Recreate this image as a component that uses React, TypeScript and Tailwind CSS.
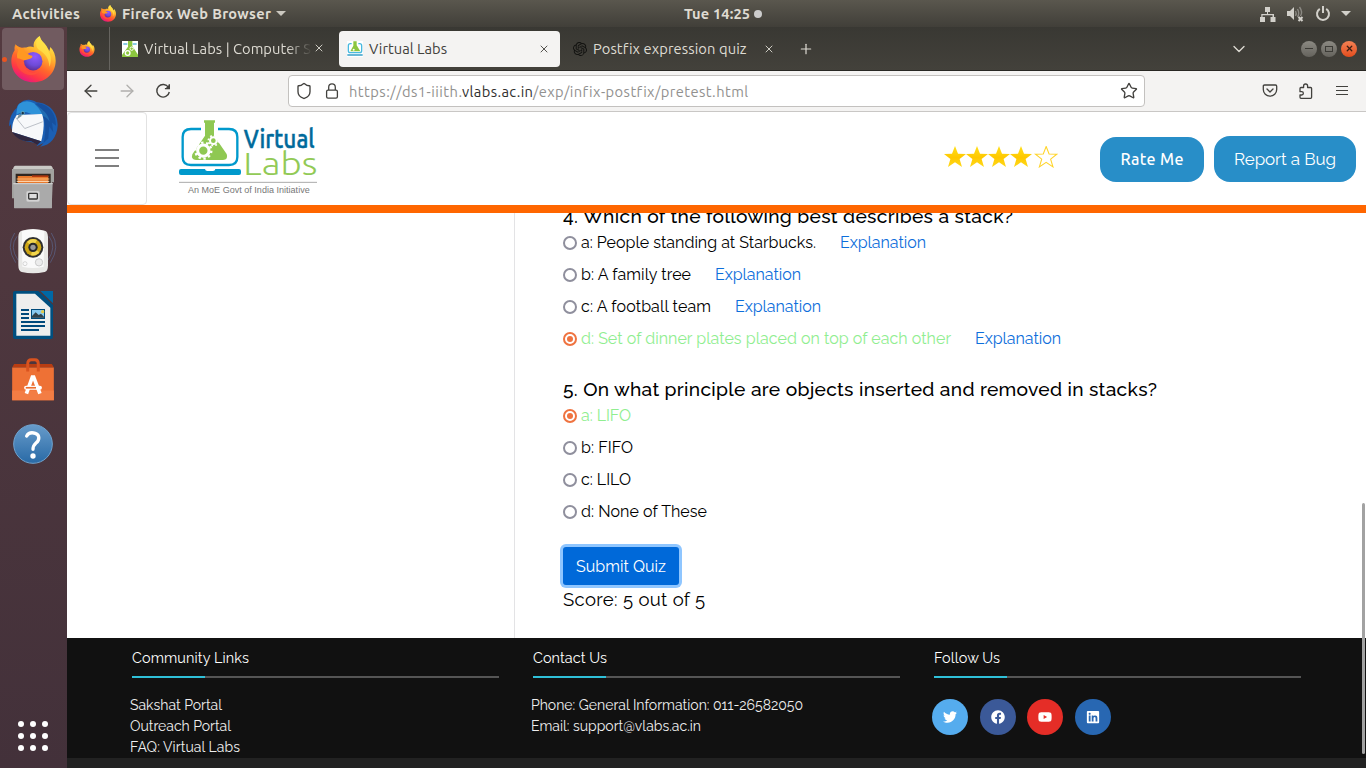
import { useLayoutEffect, useRef, useState } from 'react';
import type { ReactNode } from 'react';
import { FaTwitter, FaFacebook, FaYoutube, FaLinkedin } from 'react-icons/fa';
import { SiOpenai } from 'react-icons/si';
import { ArrowLeft, ArrowRight, ChevronDown, Plus, Shield, Star, X } from 'lucide-react';

const ubuntu = "font-['Ubuntu','Noto_Sans','Open_Sans',sans-serif]";
const raleway = "font-['Raleway','Lato',sans-serif]";

/** One line of text whose tracking is adjusted to fill a given width. */
function Fit({ w, className = '', children }: { w: number; className?: string; children: string }) {
  const ref = useRef<HTMLSpanElement>(null);
  const [spacing, setSpacing] = useState(0);
  useLayoutEffect(() => {
    if (!ref.current) return;
    const natural = ref.current.getBoundingClientRect().width - spacing * children.length;
    setSpacing((w - natural) / (children.length - 1));
  }, [w, children]);
  return (
    <span className={`block shrink-0 whitespace-pre ${className}`} style={{ width: w }}>
      <span ref={ref} className="inline-block" style={{ letterSpacing: spacing }}>
        {children}
      </span>
    </span>
  );
}

function Firefox({ className, id }: { className: string; id: string }) {
  return (
    <svg viewBox="0 0 134 142" className={className}>
      <defs>
        <linearGradient id={`${id}a`} x1="0.8" y1="0" x2="0.3" y2="1">
          <stop offset="0.05" stopColor="#fff44f" />
          <stop offset="0.35" stopColor="#ffb62e" />
          <stop offset="0.6" stopColor="#ff6a2a" />
          <stop offset="0.82" stopColor="#ff3647" />
          <stop offset="1" stopColor="#e31587" />
        </linearGradient>
        <radialGradient id={`${id}b`} cx="0.6" cy="0.25" r="0.8">
          <stop offset="0" stopColor="#9059ff" />
          <stop offset="0.6" stopColor="#6e4bd8" />
          <stop offset="1" stopColor="#5b2b92" />
        </radialGradient>
      </defs>
      <path
        fill={`url(#${id}a)`}
        d="M12 26C13 33 17 38 21 42C28 36 37 33 45 35C53 31 60 31 68 34C65 20 73 8 86 0C89 16 104 22 110 37L115 45L118 33C128 43 134 58 134 75C134 112 105 140 67 140C29 140 0 112 0 75C0 63 4 51 10 43C9 37 10 31 12 26Z"
      />
      <path fill="#ff5a36" opacity=".55" d="M13 27C18 31 28 36 38 35L39 90C43 106 62 116 82 109C70 124 40 120 25 102C12 85 10 60 21 43C15 38 12 32 13 27Z" />
      <circle cx="66" cy="76" r="28" fill={`url(#${id}b)`} />
      <path fill="#ff9822" d="M12 25C19 32 30 37 39 36C36 44 45 54 63 60C67 66 56 70 46 72C37 76 34 69 18 67C16 58 17 50 21 43C15 38 12 32 12 25Z" />
      <path fill="#ffe14a" opacity="0.75" d="M86 2C89 18 107 24 112 46C121 58 122 78 115 93C114 67 101 51 84 42C71 31 73 14 86 2Z" />
    </svg>
  );
}

function Thunderbird() {
  return (
    <svg viewBox="0 0 146 146" className="h-[49px] w-[49px]">
      <path fill="#1b5fb4" d="M34 12C48 -2 70 1 82 10C122 12 146 43 145 80C143 113 124 139 93 142L103 131L82 141L86 133L65 128C34 127 6 105 5 75L0 82C1 57 9 39 23 27C24 20 28 14 34 12Z" />
      <path fill="#2e92d9" d="M33 13C52 0 75 8 91 25C108 37 119 51 121 68C109 49 89 45 66 45C47 34 32 39 22 48C23 30 25 19 33 13Z" />
      <path fill="#123f85" d="M87 12C124 19 140 48 140 80L128 70L132 99L120 82L117 118L103 131C115 88 107 40 77 16Z" opacity=".45" />
      <path fill="#f7f8fa" d="M23 48L98 45C106 64 105 91 96 126L9 98C9 78 12 63 23 48Z" />
      <path fill="none" stroke="#9da3ae" strokeWidth="2" d="M19 54L47 88L100 68" />
      <path fill="#30273f" d="M9 98L96 126L85 136L66 126C40 127 20 116 9 98Z" />
      <circle cx="41" cy="42" r="5" fill="#183049" stroke="#77bfc7" strokeWidth="2" />
      <path fill="#78929d" d="M30 44L23 61L39 50Z" />
    </svg>
  );
}

function Files() {
  return (
    <svg viewBox="0 0 126 132" className="h-[44px] w-[42px]">
      <path fill="#c9c9c5" d="M10 2H116Q121 2 123 13H3Q5 2 10 2Z" />
      <path fill="#a2a29f" d="M0 12H126V52H120V129H6V100H0Z" />
      <path fill="#302620" d="M11 26H116V56H11Z" />
      <path fill="#e87a2e" d="M17 33H109V54H17Z" />
      <path fill="#b23a10" d="M60 31H109V36H60Z" />
      <path stroke="#ffba73" strokeWidth="3" d="M14 42H112" />
      <path stroke="#ffe5c5" strokeWidth="3" d="M14 49H112" />
      <path fill="#aaa" d="M4 54H122L119 130H7Z" />
      <path fill="#ccc" d="M4 54H122V58H4Z" />
      <rect x="43" y="78" width="40" height="32" rx="5" fill="#d4d4d4" stroke="#bababa" />
      <rect x="50" y="85" width="26" height="17" rx="2" fill="#dedede" stroke="#373737" strokeWidth="4" />
    </svg>
  );
}

function Speaker() {
  return (
    <svg viewBox="0 0 144 138" className="h-[46px] w-[48px]">
      <g fill="none" stroke="#5f76a8" strokeWidth="3" opacity=".5">
        <path d="M17 15Q-11 56 20 104M24 25Q0 57 27 96M127 15Q155 56 124 104M120 25Q144 57 117 96" />
      </g>
      <path fill="#e8e8e6" d="M38 8Q72 -2 107 8Q116 9 117 27V112Q117 130 107 132Q72 140 38 132Q28 129 28 112V27Q28 11 38 8Z" />
      <path fill="#fafafa" d="M39 9Q72 0 106 9L104 116Q72 124 40 116Z" />
      <circle cx="72" cy="58" r="31" fill="#303030" />
      <circle cx="72" cy="58" r="25" fill="#cda514" />
      <path fill="#f1d54c" d="M54 42A25 25 0 0 1 84 36L72 58ZM91 73A25 25 0 0 1 66 82L72 58Z" />
      <circle cx="72" cy="58" r="14" fill="#292929" />
      <circle cx="72" cy="58" r="8" fill="#999" />
      <circle cx="90" cy="103" r="11" fill="#ececec" stroke="#b6b6b6" strokeWidth="2" />
      <circle cx="48" cy="107" r="6" fill="none" stroke="#c6c6c6" strokeWidth="2" />
    </svg>
  );
}

function Writer() {
  return (
    <svg viewBox="0 0 120 144" className="h-[48px] w-[40px]">
      <path fill="#004f7f" d="M6 0H76L120 42V138Q120 144 114 144H6Q0 144 0 138V6Q0 0 6 0Z" />
      <path fill="#eeeeed" d="M10 8H66L112 50V134H10Z" />
      <path fill="#0068a5" d="M82 0H120V37Z" />
      <path stroke="#00497b" strokeWidth="6" d="M24 57H48M24 69H48M24 81H48M24 93H96M24 105H96M24 117H78" />
      <rect x="54" y="54" width="42" height="30" fill="#004a7a" />
      <rect x="57" y="57" width="36" height="23" fill="#89c9ef" />
      <circle cx="89" cy="62" r="5" fill="#e6cb47" />
      <path fill="#344249" d="M57 80V75L68 64L77 72L84 68L93 77V80Z" />
    </svg>
  );
}

function Software() {
  return (
    <svg viewBox="0 0 126 130" className="h-[43px] w-[42px]">
      <path fill="#b83d12" d="M6 18H120L126 29H0Z" />
      <path fill="#ee7135" d="M0 29H126V128H0Z" />
      <path fill="#f37d44" d="M0 98H126V128H0Z" />
      <path fill="none" stroke="#d9531f" strokeWidth="9" d="M47 41V18Q47 5 58 5H69Q79 5 79 18V41" />
      <path fill="none" stroke="#fff" strokeWidth="11" d="M43 108L61 58H65L84 108" />
      <rect x="36" y="84" width="54" height="12" rx="6" fill="#fff" />
      <path stroke="#ec6c2d" strokeWidth="5" d="M41 90H72" />
    </svg>
  );
}

function Help() {
  return (
    <svg viewBox="0 0 120 120" className="mt-[2px] h-10 w-10">
      <defs>
        <linearGradient id="helpFill" x1="0" y1="0" x2="0" y2="1">
          <stop stopColor="#679bca" />
          <stop offset="1" stopColor="#296aa6" />
        </linearGradient>
      </defs>
      <circle cx="60" cy="60" r="58" fill="url(#helpFill)" stroke="#70a3ce" strokeWidth="3" />
      <path fill="none" stroke="#fff" strokeWidth="10" strokeLinecap="round" strokeLinejoin="round" d="M41 36C46 27 57 25 67 28C81 33 80 48 69 57C62 63 60 67 60 76" />
      <circle cx="60" cy="96" r="8" fill="#fff" />
    </svg>
  );
}

function DockItem({ active, children }: { active?: boolean; children: ReactNode }) {
  return (
    <div className="flex h-16 w-full items-center pl-[2px]">
      <div className={`relative flex h-[62px] w-[62px] items-center justify-center rounded-[4px] ${active ? 'bg-[#715b60]' : ''}`}>
        {active && <i className="absolute left-0 h-[5px] w-[5px] rounded-full bg-[#e95420]" />}
        {children}
      </div>
    </div>
  );
}

function Flask() {
  return (
    <svg viewBox="0 0 48 48" className="mt-px h-4 w-4">
      <path fill="#fff" d="M0 0H48V48H0Z" />
      <path stroke="#159aca" strokeWidth="3" d="M4 9H16M32 9H44" />
      <path fill="#8cc63f" d="M18 0H31V15L48 41V48H0V42L18 17Z" />
      <circle cx="17" cy="36" r="7" fill="none" stroke="#fff" strokeWidth="4" />
      <circle cx="29" cy="23" r="5" fill="none" stroke="#fff" strokeWidth="3" />
    </svg>
  );
}

function LaptopIcon() {
  return (
    <svg viewBox="0 0 48 48" className="h-4 w-4">
      <path fill="#fff" d="M0 0H48V48H0Z" />
      <path fill="none" stroke="#49b9df" strokeWidth="4" d="M14 8H10Q4 8 4 14V29Q4 35 10 35H38Q44 35 44 29V14Q44 8 38 8H34" />
      <path stroke="#49a9ce" strokeWidth="5" d="M1 42H47" />
      <path fill="#8cc63f" d="M19 1H29V13L40 31H10L19 14Z" />
      <circle cx="20" cy="26" r="3" fill="#fff" />
    </svg>
  );
}

function Logo() {
  return (
    <svg viewBox="336 45 414 225" className="h-[75px] w-[138px]">
      <g fill="none" stroke="#0099cc" strokeWidth="7">
        <path d="M402 72H372Q347 72 347 96V156Q347 180 372 180H486Q511 180 511 156V96Q511 72 486 72H453" />
      </g>
      <path fill="#0099cc" d="M342 192H414Q415 198 421 198H438Q444 198 445 192H516Q522 192 522 198V204Q522 210 516 210H342Q336 210 336 204V198Q336 192 342 192Z" />
      <path fill="#8fc852" d="M411 46H444V53H441V92L479 147Q485 164 468 165H387Q371 164 376 148L414 92V53H411Z" />
      <g fill="none" stroke="#fff">
        <circle cx="409" cy="137" r="17" strokeWidth="9" />
        <circle cx="409" cy="137" r="24" strokeWidth="7" strokeDasharray="7.2 7.88" />
        <circle cx="439" cy="107" r="10" strokeWidth="6" />
        <circle cx="439" cy="107" r="15" strokeWidth="5" strokeDasharray="5.4 6.38" />
      </g>
      <text x="530" y="129" textLength="213" lengthAdjust="spacingAndGlyphs" fontFamily="Ubuntu, Roboto, sans-serif" fontWeight="500" fontSize="80" fill="#006a9b" stroke="#006a9b" strokeWidth="1.500">Virtual</text>
      <text x="529" y="210" textLength="222" lengthAdjust="spacingAndGlyphs" fontFamily="Ubuntu, Roboto, sans-serif" fontWeight="300" fontSize="98" fill="#92ca56">Labs</text>
      <path stroke="#aaa" strokeWidth="3" d="M336 232H750" />
      <text x="363" y="264" textLength="365" fontFamily="Liberation Sans, sans-serif" fontSize="27" fill="#777">An MoE Govt of India Initiative</text>
    </svg>
  );
}

function Stars() {
  const d = 'M11 0L14 7.8L22 8L15.6 13L18 21L11 16.3L4 21L6.4 13L0 8L8 7.8Z';
  return (
    <svg viewBox="0 0 114 22" className="h-[22px] w-[114px]">
      <defs>
        <linearGradient id="gold" x1="0" y1="0" x2="0" y2="1">
          <stop stopColor="#ffe01b" />
          <stop offset=".55" stopColor="#ffc800" />
          <stop offset="1" stopColor="#ffd91a" />
        </linearGradient>
      </defs>
      {[0, 22, 44, 66].map((x) => (
        <path key={x} d={d} transform={`translate(${x} 0)`} fill="url(#gold)" />
      ))}
      <path d={d} transform="translate(91.5 .5) scale(.97)" fill="#fff" stroke="#ffd42a" strokeWidth="1.1" />
    </svg>
  );
}

function Option({ w, text, checked, explain }: { w: number; text: string; checked?: boolean; explain?: boolean }) {
  return (
    <label className="flex h-8 items-center pt-[2px] text-[16px] leading-8">
      <span className={`mr-1 flex h-[14px] w-[14px] shrink-0 items-center justify-center rounded-full border-2 bg-white ${checked ? 'border-[#ef7340]' : 'border-[#8f8f9d]'}`}>
        {checked && <i className="h-[6px] w-[6px] rounded-full bg-[#ef7340]" />}
      </span>
      <Fit w={w} className={checked ? 'text-[#90ee90]' : 'text-black'}>{text}</Fit>
      {explain && <Fit w={86} className="ml-6 text-[#0d6edb]">Explanation</Fit>}
    </label>
  );
}

function FooterColumn({ title, w, children }: { title: string; w: number; children: ReactNode }) {
  return (
    <section className="w-[401px] shrink-0">
      <Fit w={w} className="ml-[2px] h-[38px] text-[14.4px] leading-[39px] text-white">{title}</Fit>
      <div className="ml-[2px] h-[2px] w-[367px] bg-[#555]">
        <div className="h-full w-[73px] bg-[#2fc0d8]" />
      </div>
      {children}
    </section>
  );
}

const social = [
  { Icon: FaTwitter, tone: 'bg-[#55acee]', gap: 'mr-3' },
  { Icon: FaFacebook, tone: 'bg-[#3b5998]', gap: 'mr-[11px]' },
  { Icon: FaYoutube, tone: 'bg-[#e52d27]', gap: 'mr-3' },
  { Icon: FaLinkedin, tone: 'bg-[#2867b2]', gap: '' },
];

export default function App() {
  return (
    <div className={`flex h-[768px] w-[1366px] flex-col overflow-hidden bg-white ${ubuntu}`}>
      <header className="flex h-[27px] shrink-0 items-center bg-linear-to-b from-[#5a574e] to-[#413f39] text-[14.6px] font-bold leading-[27px] text-[#dfdbd2]">
        <Fit w={68} className="ml-3">Activities</Fit>
        <Firefox id="top" className="ml-5 h-[17px] w-4" />
        <Fit w={149} className="ml-[6px]">Firefox Web Browser</Fit>
        <i className="ml-[5px] border-x-[5px] border-t-[5px] border-x-transparent border-t-[#cbc8c0]" />
        <Fit w={66} className="ml-[398px]">Tue 14:25</Fit>
        <i className="ml-1 h-2 w-2 rounded-full bg-[#ccc]" />
        <div className="ml-auto flex items-center pr-[15px]">
          <svg viewBox="0 0 16 16" className="mr-[-1px] h-4 w-4" fill="#d2d0ca">
            <path d="M5 1H10V6H8V8H14V11H15.5V16H10.500V11H12.500V9.200H2.500V11H5V16H0V11H1.300V8H7V6H5Z" />
          </svg>
          <svg viewBox="0 0 18 16" className="ml-3 h-4 w-[18px]">
            <path fill="#d2d0ca" d="M0 5H3L7 1V14L3 10H0Z" />
            <path fill="none" stroke="#8b8983" strokeWidth="1.400" d="M8.500 5Q10 7.500 8.500 10M10.500 3Q13 7.500 10.500 11M12.500 1Q16 6 13.500 10" />
            <path stroke="#d2d0ca" strokeWidth="2" d="M11.500 11L15.500 15M15.500 11L11.500 15" />
          </svg>
          <svg viewBox="0 0 16 16" className="ml-[10px] h-4 w-4" fill="none" stroke="#d2d0ca" strokeWidth="2">
            <path d="M4.800 2.800A6 6 0 1 0 11.200 2.800M8 0V7" />
          </svg>
          <i className="ml-[10px] border-x-[5px] border-t-[5px] border-x-transparent border-t-[#d2d0ca]" />
        </div>
      </header>

      <div className="flex min-h-0 flex-1">
        <nav className="flex w-[67px] shrink-0 flex-col bg-linear-to-b from-[#543a40] to-[#43313a]">
          <DockItem active><Firefox id="dock" className="h-[47px] w-[45px]" /></DockItem>
          <DockItem><Thunderbird /></DockItem>
          <DockItem><Files /></DockItem>
          <DockItem><Speaker /></DockItem>
          <DockItem><Writer /></DockItem>
          <DockItem><Software /></DockItem>
          <DockItem><Help /></DockItem>
          <div className="mt-auto grid h-16 grid-cols-[repeat(3,6px)] content-center justify-center gap-[6px] pr-[1px]">
            {Array.from({ length: 9 }, (_, i) => (
              <i key={i} className="h-[6px] w-[6px] rounded-full bg-white" />
            ))}
          </div>
        </nav>

        <div className="flex min-w-0 flex-1 flex-col">
          <div className="flex h-11 shrink-0 items-center border-b border-[#282723] bg-linear-to-b from-[#393833] to-[#43413b] text-[14.7px] text-[#dedbd3]">
            <div className="flex h-full w-[43px] shrink-0 items-center border-r border-[#66645f] pl-[12px]">
              <Firefox id="pin" className="h-4 w-4" />
            </div>
            <div className="flex w-[229px] shrink-0 items-center pl-3">
              <Flask />
              <div className="ml-[6px] w-[168px] overflow-hidden pt-[2px] mask-r-from-85% mask-r-to-100%">
                <Fit w={167}>Virtual Labs | Computer S</Fit>
              </div>
              <X className="ml-px h-3 w-3" strokeWidth={1.8} />
            </div>
            <div className="flex h-9 w-[221px] shrink-0 items-center rounded-[4px] bg-[#f4f3f2] pl-2 text-[#42413c]">
              <LaptopIcon />
              <Fit w={78} className="ml-[6px] pt-[2px]">Virtual Labs</Fit>
              <X className="ml-auto mr-[10px] h-3 w-3" strokeWidth={1.8} />
            </div>
            <SiOpenai className="ml-[13px] h-[14px] w-[14px] text-[#11110f]" />
            <Fit w={153} className="ml-[6px] pt-[2px]">Postfix expression quiz</Fit>
            <X className="ml-[17px] h-3 w-3" strokeWidth={1.8} />
            <Plus className="ml-[23px] h-4 w-4" strokeWidth={1.8} />
            <div className="ml-auto flex items-center pr-[9px]">
              <ChevronDown className="mr-[52px] h-5 w-5" strokeWidth={1.6} />
              <span className="mr-1 flex h-4 w-4 items-center justify-center rounded-full bg-linear-to-b from-[#8c8a83] to-[#65635d]">
                <i className="h-px w-2 bg-[#3c3b36]" />
              </span>
              <span className="mr-1 flex h-4 w-4 items-center justify-center rounded-full bg-linear-to-b from-[#8c8a83] to-[#65635d]">
                <i className="h-[6px] w-2 border border-[#3c3b36]" />
              </span>
              <span className="flex h-4 w-4 items-center justify-center rounded-full bg-linear-to-b from-[#f48153] to-[#e34c1b] text-[#3c1f15]">
                <X className="h-[9px] w-[9px]" strokeWidth={3.500} />
              </span>
            </div>
          </div>

          <div className="flex h-[41px] shrink-0 items-center border-b border-[#c9c7c5] bg-[#f4f3f2] text-[#42413e]">
            <ArrowLeft className="ml-[14px] h-5 w-5" strokeWidth={1.6} />
            <ArrowRight className="ml-4 h-5 w-5 text-[#b0afad]" strokeWidth={1.6} />
            <svg viewBox="0 0 16 16" className="ml-[18px] h-4 w-4" fill="none" stroke="currentColor" strokeWidth="1.400">
              <path d="M13.500 4.500A6.300 6.300 0 1 0 14.300 9M14.300 1.200V5.600H9.900" />
              <path d="M14.500 1.500V5.800H10.200Z" fill="currentColor" stroke="none" />
            </svg>
            <div className="ml-[117px] flex h-8 w-[857px] items-center rounded-[4px] border border-[#c3c1bf] bg-white">
              <Shield className="ml-[6px] h-[18px] w-[18px]" strokeWidth={1.8} />
              <svg viewBox="0 0 16 16" className="ml-[11px] h-4 w-4" fill="none" stroke="currentColor" strokeWidth="1.300">
                <rect x="2.600" y="7.200" width="10.800" height="8" rx="1.400" />
                <path d="M4.700 7V4.200A3.300 3.300 0 0 1 11.300 4.200V7" />
              </svg>
              <div className="ml-[9px] flex pt-[2px] text-[14.7px] leading-7 text-[#92918f]">
                <Fit w={113}>https://ds1-iiith.</Fit>
                <Fit w={71} className="text-[#30302e]">vlabs.ac.in</Fit>
                <Fit w={214}>/exp/infix-postfix/pretest.html</Fit>
              </div>
              <Star className="ml-auto mr-[6px] h-[18px] w-[18px]" strokeWidth={1.8} />
            </div>
            <svg viewBox="0 0 16 16" className="ml-[117px] h-4 w-4" fill="none" stroke="currentColor" strokeWidth="1.300" strokeLinecap="round" strokeLinejoin="round">
              <path d="M2.500 2H13.500Q14.700 2 14.700 3.200V6.500A6.700 6.700 0 0 1 1.300 6.500V3.200Q1.300 2 2.500 2ZM5 6L8 9L11 6" />
            </svg>
            <svg viewBox="0 0 16 16" className="ml-[20px] h-4 w-4" fill="none" stroke="currentColor" strokeWidth="1.300" strokeLinejoin="round">
              <path d="M5.600 4.500V3A2 2 0 0 1 9.600 3V4.500H12.600Q13.600 4.500 13.600 5.500V14.300Q13.600 15.300 12.600 15.300H3Q2 15.300 2 14.300V12H3.700A1.600 1.600 0 0 0 3.700 8.700H2V5.500Q2 4.500 3 4.500Z" />
            </svg>
            <svg viewBox="0 0 12 12" className="ml-[22px] h-3 w-3" stroke="currentColor" strokeWidth="1.200">
              <path d="M0 1.500H12M0 5.500H12M0 9.500H12" />
            </svg>
          </div>

          <main className={`relative flex min-h-0 flex-1 flex-col bg-white ${raleway}`}>
            <header className="flex h-[101px] shrink-0 items-center border-b-8 border-[#ff6600] bg-white">
              <button className="flex h-full w-20 shrink-0 flex-col items-center justify-center gap-[6px] rounded-[4px] border border-[#e2e2e2] pb-[2px]">
                <i className="h-[2px] w-6 bg-[#7f7f7f]" />
                <i className="h-[2px] w-6 bg-[#7f7f7f]" />
                <i className="h-[2px] w-6 bg-[#7f7f7f]" />
              </button>
              <div className="ml-8 mt-[-2px]"><Logo /></div>
              <div className="ml-auto mr-[42px] mt-[-3px]"><Stars /></div>
              <button className="mr-[10px] mt-[2px] flex h-[45px] w-[104px] items-center justify-center rounded-[16px] bg-[#288ec8] text-white">
                <Fit w={63} className={`pb-px text-[16px] font-medium ${ubuntu}`}>Rate Me</Fit>
              </button>
              <button className="mr-[10px] mt-[1px] flex h-[46px] w-[142px] items-center justify-center rounded-[16px] bg-[#288ec8] text-white">
                <Fit w={102} className="pt-[2px] text-[17px]">Report a Bug</Fit>
              </button>
            </header>

            <div className="flex h-[425px] shrink-0 overflow-hidden">
              <aside className="w-[448px] shrink-0 border-r border-[#e3e3e5]" />
              <div className="-mt-[9px] pl-12 text-black">
                <Fit w={450} className="h-[22px] text-[19.2px] font-medium leading-[24px]">4. Which of the following best describes a stack?</Fit>
                <Option w={235} text="a: People standing at Starbucks." explain />
                <Option w={110} text="b: A family tree" explain />
                <Option w={130} text="c: A football team" explain />
                <Option w={370} text="d: Set of dinner plates placed on top of each other" checked explain />
                <Fit w={594} className="mt-[23px] h-[22px] text-[19.2px] font-medium leading-[24px]">5. On what principle are objects inserted and removed in stacks?</Fit>
                <Option w={50} text="a: LIFO" checked />
                <Option w={52} text="b: FIFO" />
                <Option w={50} text="c: LILO" />
                <Option w={126} text="d: None of These" />
                <button className="mt-5 flex h-[38px] w-[116px] items-center justify-center rounded-[3px] bg-[#0069d9] text-white ring-3 ring-[#8fc6ff]">
                  <Fit w={90} className="pt-[2px] text-[16px]">Submit Quiz</Fit>
                </button>
                <Fit w={142} className="text-[18.5px] leading-[29px]">Score: 5 out of 5</Fit>
              </div>
            </div>

            <footer className="flex h-[120px] shrink-0 overflow-hidden bg-[#111] pl-[63px] text-[14px] leading-[21px] text-[#eee]">
              <FooterColumn title="Community Links" w={117}>
                <div className="pt-[17px]">
                  <Fit w={92}>Sakshat Portal</Fit>
                  <Fit w={101}>Outreach Portal</Fit>
                  <Fit w={110}>FAQ: Virtual Labs</Fit>
                </div>
              </FooterColumn>
              <FooterColumn title="Contact Us" w={74}>
                <div className="pt-[17px]">
                  <Fit w={272}>Phone: General Information: 011-26582050</Fit>
                  <Fit w={170}>Email: support@vlabs.ac.in</Fit>
                </div>
              </FooterColumn>
              <FooterColumn title="Follow Us" w={66}>
                <div className="flex pt-[21px]">
                  {social.map(({ Icon, tone, gap }) => (
                    <a key={tone} className={`flex h-9 w-9 items-center justify-center rounded-full text-white ${tone} ${gap}`}>
                      <Icon className="h-[14px] w-[14px]" />
                    </a>
                  ))}
                </div>
              </FooterColumn>
            </footer>
            <div className="flex-1 bg-[#222]" />
            <div className="absolute right-[1px] top-[391px] h-[251px] w-[3px] rounded-full bg-[#a2a2a2]" />
          </main>
        </div>
      </div>
    </div>
  );
}
